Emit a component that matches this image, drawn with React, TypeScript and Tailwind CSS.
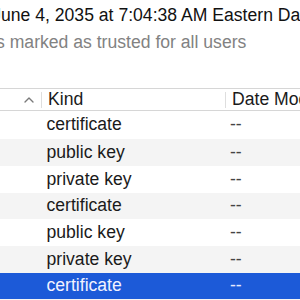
import { ChevronUp } from 'lucide-react';

const rows = [
  { kind: 'certificate', h: 'h-[28px]' },
  { kind: 'public key', h: 'h-[27px]' },
  { kind: 'private key', h: 'h-[27px]' },
  { kind: 'certificate', h: 'h-[26px]' },
  { kind: 'public key', h: 'h-[27px]' },
  { kind: 'private key', h: 'h-[27px]' },
  { kind: 'certificate', h: 'h-[26px]' },
  { kind: '', h: 'h-[20px]' },
];

function App() {
  return (
    <div className="w-[300px] h-[300px] overflow-hidden bg-white font-['Liberation_Sans',Arial,sans-serif] text-[17.6px]">
      <section className="h-[88px] pt-[5px] whitespace-nowrap">
        <p className="leading-[20px] text-[#111] ml-[-7.8px]">June 4, 2035 at 7:04:38 AM Eastern Daylight Time</p>
        <p className="mt-[7px] leading-[20px] text-[#828282] ml-[-4px]">s marked as trusted for all users</p>
      </section>

      <div className="h-[23px] flex items-center border-y border-[#d6d6d6] text-[#1a1a1a] whitespace-nowrap">
        <div className="w-[41px] shrink-0 h-full flex items-center justify-end pr-[4px]">
          <ChevronUp size={16} strokeWidth={2} className="text-[#7a7a7a]" />
        </div>
        <div className="w-px shrink-0 h-[16px] bg-[#dedede]" />
        <div className="w-[183px] shrink-0 pl-[6px] leading-[20px] mt-[-2px]">Kind</div>
        <div className="w-px shrink-0 h-[16px] bg-[#dedede]" />
        <div className="shrink-0 pl-[6px] leading-[20px] mt-[-2px]">Date Modified</div>
      </div>

      <div>
        {rows.map((r, i) => {
          const selected = i === 6;
          const bg = selected ? 'bg-[#1c5ad8]' : i % 2 === 1 ? 'bg-[#f4f4f4]' : 'bg-white';
          return (
            <div key={i} className={`${r.h} ${bg} flex items-center leading-[20px] ${selected ? 'text-[#f2f2ff]' : 'text-[#1a1a1a]'}`}>
              <div className="w-[41px] shrink-0" />
              <div className="w-[184px] shrink-0 pl-[5.5px] mt-[-2px]">{r.kind}</div>
              <div className={`flex-1 pl-[5px] mt-[-2px] ${selected ? 'text-[#e6e9ff]' : 'text-[#444]'}`}>{r.kind ? '--' : ''}</div>
            </div>
          );
        })}
      </div>
    </div>
  );
}

export default App;
